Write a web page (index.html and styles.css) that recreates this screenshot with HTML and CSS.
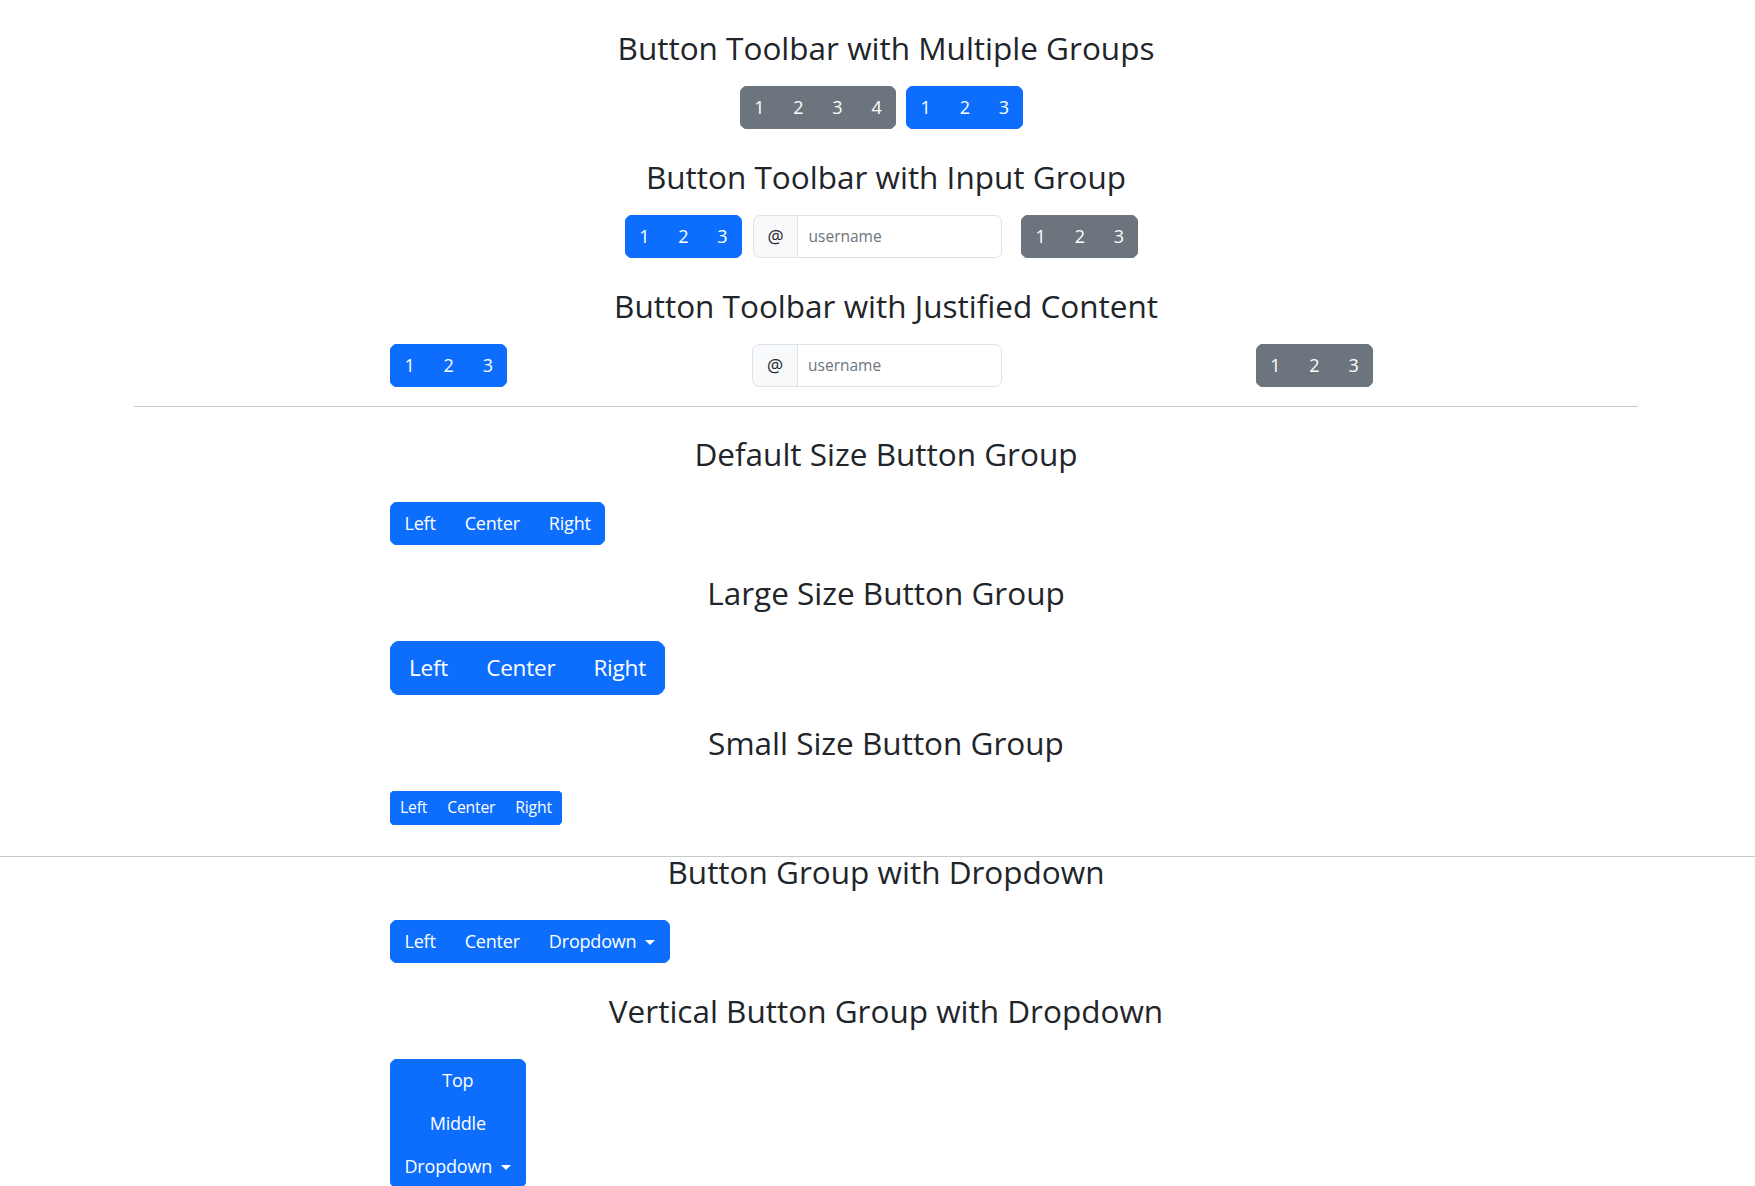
FILE: index.html
```html
<!DOCTYPE html>
<html lang="en">
<head>
<meta charset="utf-8">
<title>Button Groups</title>
<link rel="stylesheet" href="styles.css">
</head>
<body>
<div class="page">
  <h3 class="title first">Button Toolbar with Multiple Groups</h3>
  <div class="col">
    <div class="toolbar centered">
      <div class="btn-group gap-r10">
        <button class="btn gray">1</button>
        <button class="btn gray">2</button>
        <button class="btn gray">3</button>
        <button class="btn gray">4</button>
      </div>
      <div class="btn-group">
        <button class="btn blue">1</button>
        <button class="btn blue">2</button>
        <button class="btn blue">3</button>
      </div>
    </div>
  </div>

  <h3 class="title">Button Toolbar with Input Group</h3>
  <div class="col">
    <div class="toolbar centered">
      <div class="btn-group gap-r11">
        <button class="btn blue">1</button>
        <button class="btn blue">2</button>
        <button class="btn blue">3</button>
      </div>
      <div class="input-group gap-r19">
        <span class="addon">@</span>
        <input class="field" type="text" placeholder="username">
      </div>
      <div class="btn-group">
        <button class="btn gray">1</button>
        <button class="btn gray">2</button>
        <button class="btn gray">3</button>
      </div>
    </div>
  </div>

  <h3 class="title">Button Toolbar with Justified Content</h3>
  <div class="col">
    <div class="toolbar justified">
      <div class="btn-group">
        <button class="btn blue">1</button>
        <button class="btn blue">2</button>
        <button class="btn blue">3</button>
      </div>
      <div class="input-group gap-r9">
        <span class="addon">@</span>
        <input class="field" type="text" placeholder="username">
      </div>
      <div class="btn-group">
        <button class="btn gray">1</button>
        <button class="btn gray">2</button>
        <button class="btn gray">3</button>
      </div>
    </div>
  </div>

  <hr class="rule">

  <h3 class="title after-rule">Default Size Button Group</h3>
  <div class="col row-gap">
    <div class="btn-group">
      <button class="btn blue">Left</button>
      <button class="btn blue">Center</button>
      <button class="btn blue">Right</button>
    </div>
  </div>

  <h3 class="title">Large Size Button Group</h3>
  <div class="col row-gap">
    <div class="btn-group lg">
      <button class="btn blue">Left</button>
      <button class="btn blue">Center</button>
      <button class="btn blue">Right</button>
    </div>
  </div>

  <h3 class="title">Small Size Button Group</h3>
  <div class="col row-gap">
    <div class="btn-group sm">
      <button class="btn blue">Left</button>
      <button class="btn blue">Center</button>
      <button class="btn blue">Right</button>
    </div>
  </div>
</div>

<hr class="rule full">

<div class="page tail">
  <h3 class="title first">Button Group with Dropdown</h3>
  <div class="col row-gap">
    <div class="btn-group">
      <button class="btn blue">Left</button>
      <button class="btn blue">Center</button>
      <button class="btn blue">Dropdown<span class="caret"></span></button>
    </div>
  </div>

  <h3 class="title">Vertical Button Group with Dropdown</h3>
  <div class="col row-gap">
    <div class="btn-group vertical">
      <button class="btn blue">Top</button>
      <button class="btn blue">Middle</button>
      <button class="btn blue">Dropdown<span class="caret"></span></button>
    </div>
  </div>
</div>
</body>
</html>
```

FILE: styles.css
```css
* {
  box-sizing: border-box;
}

html, body {
  height: 1186px;
  overflow: hidden;
}

body {
  margin: 0;
  font-family: "Open Sans", "Noto Sans", sans-serif;
  color: #212529;
  background: #ffffff;
}

.page {
  width: 1504px;
  margin-left: 134px;
  padding-top: 29px;
}

.page.tail {
  padding-top: 0;
}

.title {
  margin: 29px 0 0;
  font-size: 31.5px;
  font-weight: 500;
  line-height: 38px;
  text-align: center;
  color: #212529;
}

.title.first {
  margin-top: 0;
}

.title.after-rule {
  margin-top: 28px;
}

.page.tail .title.first {
  margin-top: -4px;
}

.col {
  margin-left: 256px;
  width: 983px;
  margin-top: 19px;
}

.col.row-gap {
  margin-top: 29px;
}

.toolbar {
  display: flex;
  align-items: stretch;
}

.toolbar.centered {
  justify-content: center;
}

.toolbar.justified {
  justify-content: space-between;
}

.gap-r9 { margin-right: 9px; }
.gap-r10 { margin-right: 10px; }
.gap-r11 { margin-right: 11px; }
.gap-r19 { margin-right: 19px; }

.btn-group {
  display: inline-flex;
  vertical-align: middle;
  border-radius: 7px;
  overflow: hidden;
}

.btn {
  font-family: inherit;
  font-size: 18px;
  font-weight: 400;
  line-height: 27px;
  letter-spacing: -0.2px;
  padding: 7px 13.5px;
  border: 1px solid transparent;
  margin: 0;
  color: #ffffff;
  cursor: pointer;
  white-space: nowrap;
}

.btn.blue {
  background: #0d6efd;
  border-color: #0d6efd;
}

.btn.gray {
  background: #6c757d;
  border-color: #6c757d;
}

.btn-group.lg {
  border-radius: 9px;
}

.btn-group.lg .btn {
  font-size: 22.5px;
  line-height: 33.75px;
  padding: 9px 18px;
}

.btn-group.sm {
  border-radius: 4.5px;
}

.btn-group.sm .btn {
  font-size: 15.75px;
  line-height: 23.6px;
  padding: 4.5px 9px;
}

.btn-group.vertical {
  flex-direction: column;
  align-items: stretch;
}

.caret {
  display: inline-block;
  margin-left: 0.5em;
  vertical-align: 0.2em;
  border-top: 0.3em solid #ffffff;
  border-right: 0.3em solid transparent;
  border-left: 0.3em solid transparent;
  border-bottom: 0;
}

.input-group {
  display: flex;
  align-items: stretch;
}

.addon {
  display: flex;
  align-items: center;
  padding: 7px 13.5px;
  font-size: 18px;
  line-height: 27px;
  color: #212529;
  background: #f8f9fa;
  border: 1px solid #dee2e6;
  border-radius: 7px 0 0 7px;
}

.field {
  width: 205px;
  margin-left: -1px;
  padding: 7px 10.5px;
  font-family: inherit;
  font-size: 15.5px;
  line-height: 27px;
  color: #212529;
  background: #ffffff;
  border: 1px solid #dee2e6;
  border-radius: 0 7px 7px 0;
  outline: none;
}

.field::placeholder {
  color: #6c757d;
}

.rule {
  margin: 19px 0 0;
  border: 0;
  border-top: 1px solid #c8c9ca;
  height: 0;
}

.rule.full {
  margin: 31px 0 0;
  width: 100%;
}
```
